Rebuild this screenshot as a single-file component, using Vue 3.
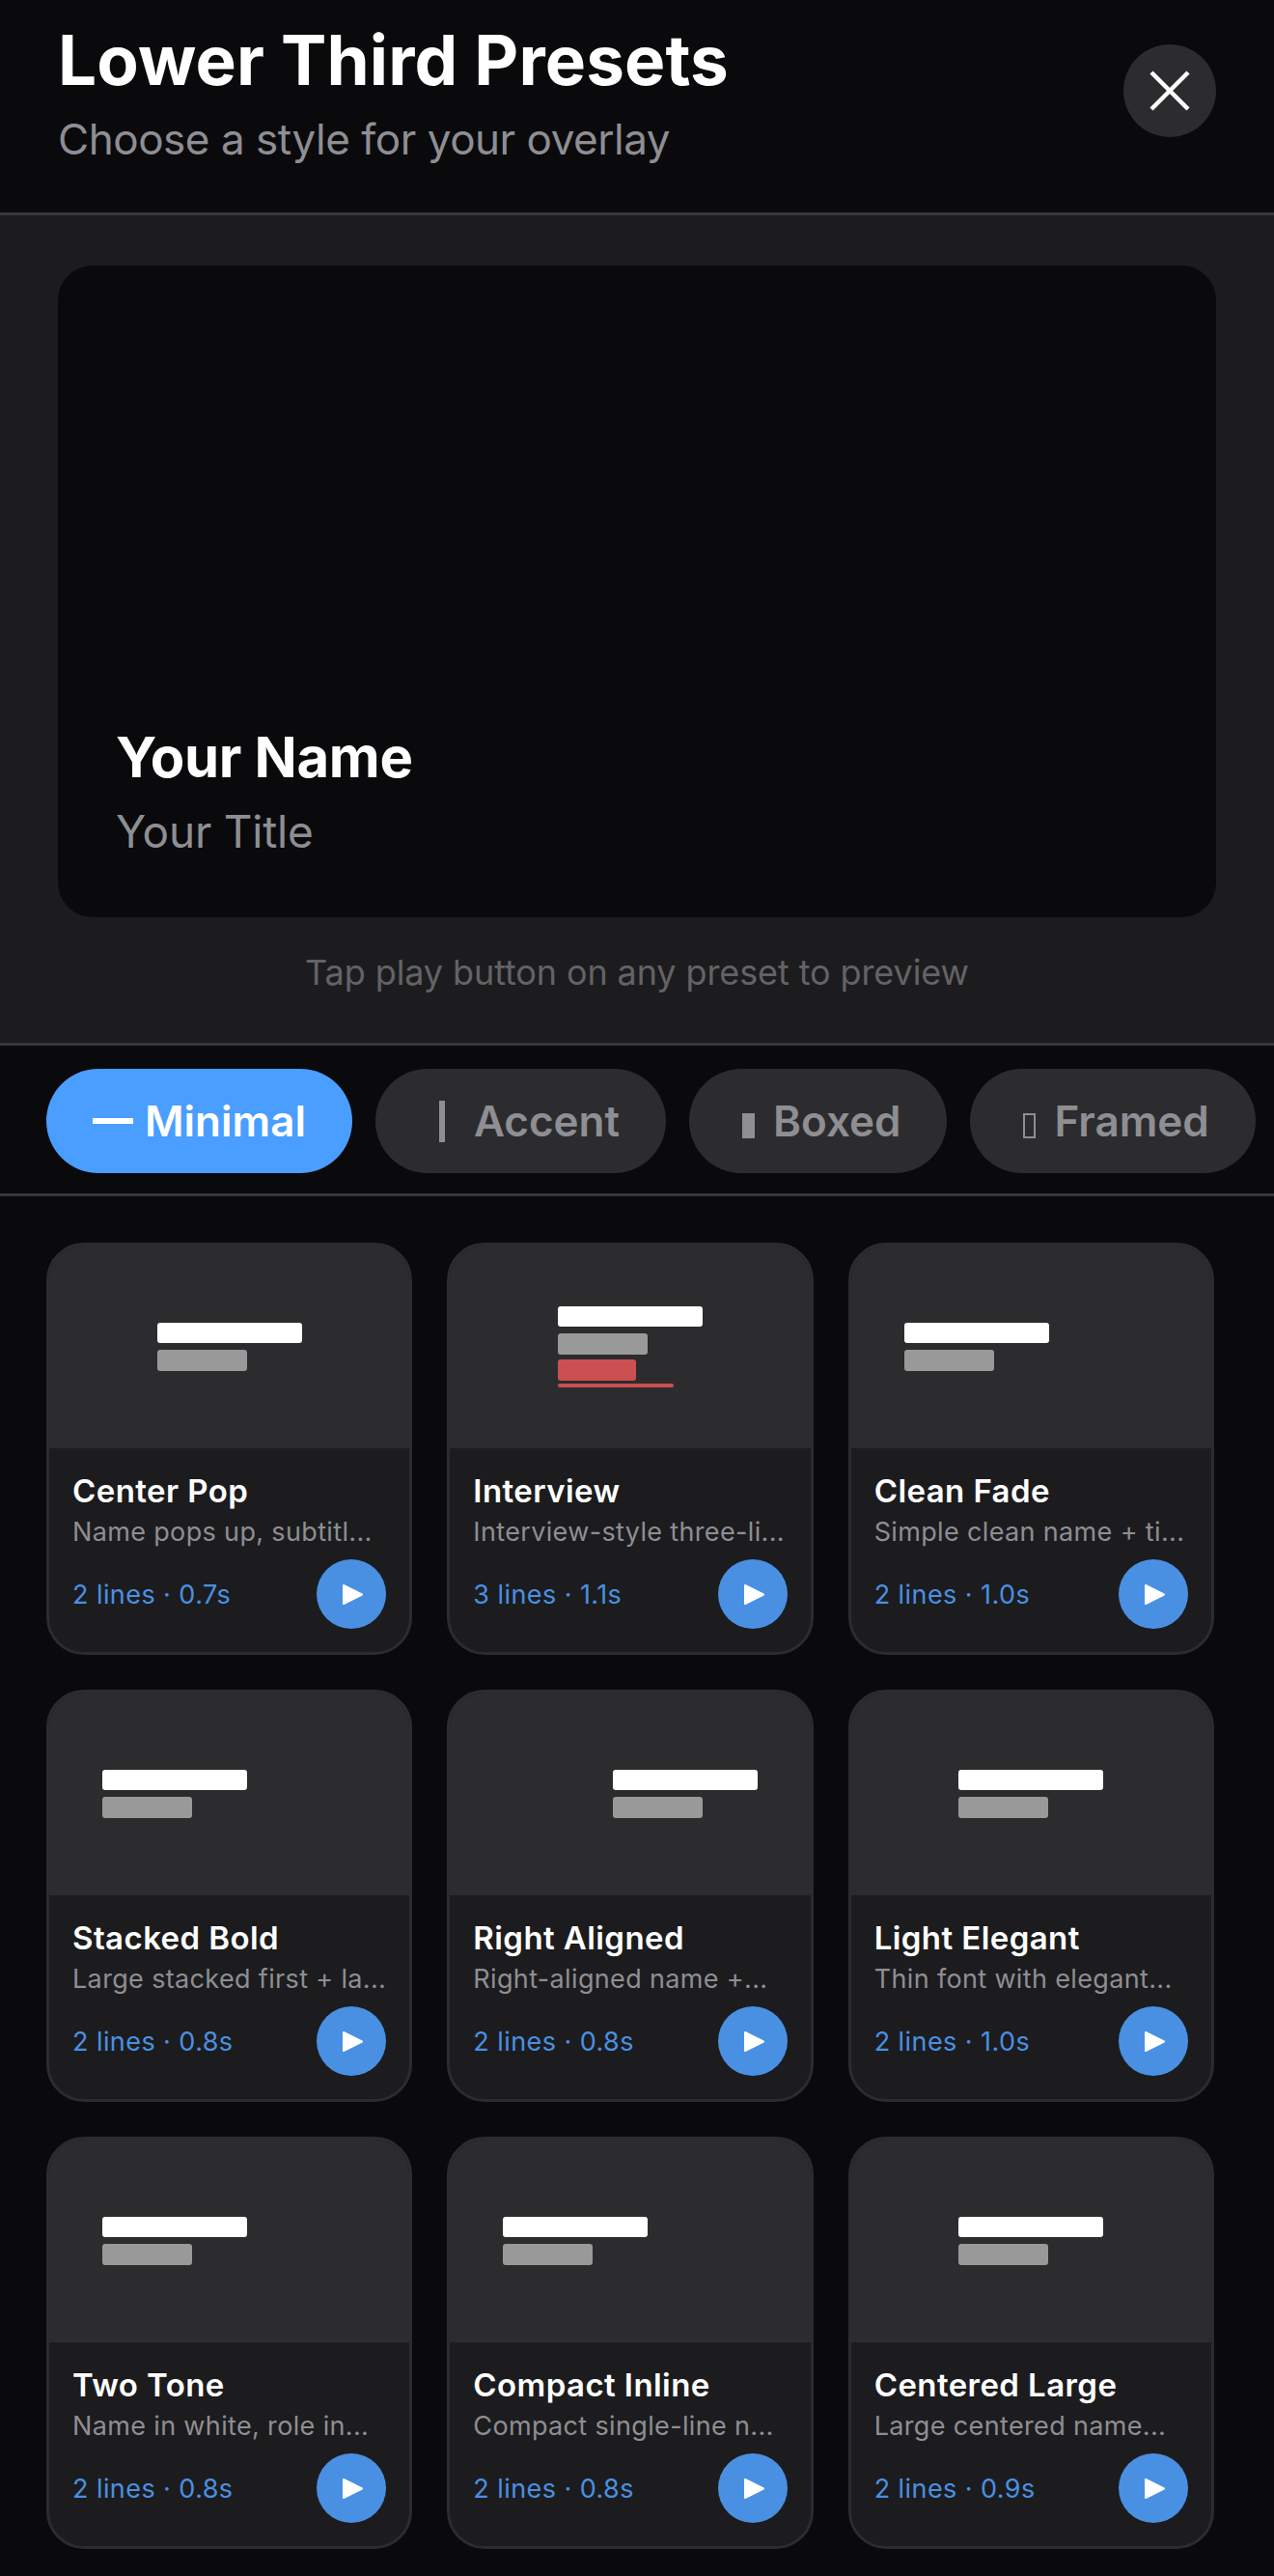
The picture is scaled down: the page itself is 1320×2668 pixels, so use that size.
<script setup>
const tabs = [
  { label: 'Minimal', glyph: 'dash', active: true },
  { label: 'Accent', glyph: 'bar', active: false },
  { label: 'Boxed', glyph: 'solid', active: false },
  { label: 'Framed', glyph: 'frame', active: false }
]
const presets = [
  { name: 'Center Pop', desc: 'Name pops up, subtitl...', meta: '2 lines · 0.7s', align: 'center' },
  { name: 'Interview', desc: 'Interview-style three-li...', meta: '3 lines · 1.1s', align: 'center', red: true },
  { name: 'Clean Fade', desc: 'Simple clean name + ti...', meta: '2 lines · 1.0s', align: 'start' },
  { name: 'Stacked Bold', desc: 'Large stacked first + la...', meta: '2 lines · 0.8s', align: 'start' },
  { name: 'Right Aligned', desc: 'Right-aligned name +...', meta: '2 lines · 0.8s', align: 'end' },
  { name: 'Light Elegant', desc: 'Thin font with elegant...', meta: '2 lines · 1.0s', align: 'center' },
  { name: 'Two Tone', desc: 'Name in white, role in...', meta: '2 lines · 0.8s', align: 'start' },
  { name: 'Compact Inline', desc: 'Compact single-line n...', meta: '2 lines · 0.8s', align: 'start' },
  { name: 'Centered Large', desc: 'Large centered name...', meta: '2 lines · 0.9s', align: 'center' }
]
</script>

<template>
  <div class="page">
    <header class="header">
      <div class="heading">
        <h1 class="title">Lower Third Presets</h1>
        <p class="subtitle">Choose a style for your overlay</p>
      </div>
      <button class="close" aria-label="Close">
        <svg width="42" height="42" viewBox="0 0 42 42">
          <path d="M2 2 L40 40 M40 2 L2 40" stroke="#fff" stroke-width="4.5" stroke-linecap="butt" fill="none" />
        </svg>
      </button>
    </header>

    <section class="stage">
      <div class="preview">
        <div class="preview-name">Your Name</div>
        <div class="preview-title">Your Title</div>
      </div>
      <p class="hint">Tap play button on any preset to preview</p>
    </section>

    <nav class="tabs">
      <button v-for="t in tabs" :key="t.label" class="tab" :class="{ active: t.active }">
        <span class="glyph" :class="'glyph-' + t.glyph"><i></i></span>
        <span>{{ t.label }}</span>
      </button>
    </nav>

    <main class="grid">
      <article v-for="p in presets" :key="p.name" class="card">
        <div class="thumb" :class="'align-' + p.align">
          <div class="bars">
            <div class="bar bar-name"></div>
            <div class="bar bar-role"></div>
            <template v-if="p.red">
              <div class="bar bar-red"></div>
              <div class="bar bar-line"></div>
            </template>
          </div>
        </div>
        <div class="body">
          <div class="name">{{ p.name }}</div>
          <div class="desc">{{ p.desc }}</div>
          <div class="foot">
            <span class="meta">{{ p.meta }}</span>
            <button class="play" aria-label="Play">
              <svg width="72" height="72" viewBox="0 0 72 72">
                <path d="M28 27 L47 36.5 L28 46 Z" fill="#fff" stroke="#fff" stroke-width="2" stroke-linejoin="round" />
              </svg>
            </button>
          </div>
        </div>
      </article>
    </main>
  </div>
</template>

<style>
html, body { margin: 0; background: #0a0a0c; }
</style>

<style scoped>
.page {
  width: 1320px;
  height: 2668px;
  overflow: hidden;
  background: #0a0a0c;
  font-family: Inter, "Noto Sans", sans-serif;
  color: #fff;
}
button { font-family: inherit; border: 0; padding: 0; }

.header {
  display: flex;
  justify-content: space-between;
  align-items: flex-start;
  padding: 20px 60px 48px;
  border-bottom: 3px solid #38383a;
}
.title { margin: 0; font-size: 71px; line-height: 84px; font-weight: 700; letter-spacing: 0.13px; }
.subtitle { margin: 12px 0 0; font-size: 44px; line-height: 56px; letter-spacing: -0.47px; color: #8e8e93; }
.close {
  width: 96px;
  height: 96px;
  margin-top: 26px;
  border-radius: 50%;
  background: #2c2c2e;
  display: flex;
  align-items: center;
  justify-content: center;
}

.stage {
  background: #1c1c1e;
  padding: 52px 60px 49px;
  border-bottom: 3px solid #38383a;
}
.preview {
  height: 675px;
  box-sizing: border-box;
  padding: 60px;
  border-radius: 36px;
  background: #0a0a0c;
  display: flex;
  flex-direction: column;
  justify-content: flex-end;
}
.preview-name { font-size: 58px; line-height: 72px; font-weight: 700; letter-spacing: -0.3px; }
.preview-title { margin-top: 12px; font-size: 46px; line-height: 58px; letter-spacing: -0.2px; color: #8e8e93; }
.hint {
  margin: 33px 0 0;
  text-align: center;
  font-size: 36px;
  line-height: 48px;
  letter-spacing: -0.1px;
  color: #636366;
}

.tabs {
  display: flex;
  gap: 24px;
  padding: 24px 0 21px 48px;
  border-bottom: 3px solid #38383a;
  overflow: hidden;
}
.tab {
  flex: none;
  height: 108px;
  padding: 0 48px;
  border-radius: 54px;
  background: #2c2c2e;
  color: #8e8e93;
  font-size: 44px;
  font-weight: 600;
  display: flex;
  align-items: center;
  gap: 12px;
}
.tab.active { background: #4a9eff; color: #fff; }
.glyph { display: flex; align-items: center; justify-content: center; width: 27px; }
.glyph i { display: block; box-sizing: border-box; }
.glyph-dash, .glyph-bar { width: 42px; }
.glyph-dash i { width: 42px; height: 6px; background: currentColor; }
.glyph-bar i { width: 6px; height: 43px; background: currentColor; }
.glyph-solid i { width: 13px; height: 26px; margin-top: 10px; background: currentColor; }
.glyph-frame i { width: 13px; height: 26px; margin-top: 10px; border: 2px solid currentColor; }

.grid {
  display: grid;
  grid-template-columns: repeat(3, 1fr);
  gap: 36px;
  padding: 48px 62px 0 48px;
}
.card {
  border: 3px solid #2c2c2e;
  border-radius: 39px;
  overflow: hidden;
  background: #1c1c1e;
}
.thumb {
  height: 210px;
  background: #2c2c2e;
  box-sizing: border-box;
  padding: 0 55px;
  display: flex;
  align-items: center;
}
.align-start { justify-content: flex-start; }
.align-center { justify-content: center; }
.align-end { justify-content: flex-end; }
.bars { width: 150px; }
.bar { border-radius: 3px; }
.bar-name { width: 150px; height: 21px; background: #fff; }
.bar-role { width: 93px; height: 22px; margin-top: 7px; background: #999; }
.bar-red { width: 81px; height: 22px; margin-top: 5px; background: #cc4f52; }
.bar-line { width: 120px; height: 4px; margin-top: 3px; background: #cc4f52; }

.body { padding: 24px; }
.name { font-size: 33px; line-height: 40px; font-weight: 600; letter-spacing: 0.42px; white-space: nowrap; }
.desc { margin-top: 6px; font-size: 27px; line-height: 33px; letter-spacing: 0.35px; color: #8e8e93; white-space: nowrap; }
.foot { margin-top: 12px; display: flex; align-items: center; justify-content: space-between; }
.meta { font-size: 27px; line-height: 33px; letter-spacing: 0.43px; color: #4a90e2; }
.play {
  width: 72px;
  height: 72px;
  border-radius: 50%;
  background: #4a90e2;
  display: block;
}
.play svg { display: block; }
</style>
